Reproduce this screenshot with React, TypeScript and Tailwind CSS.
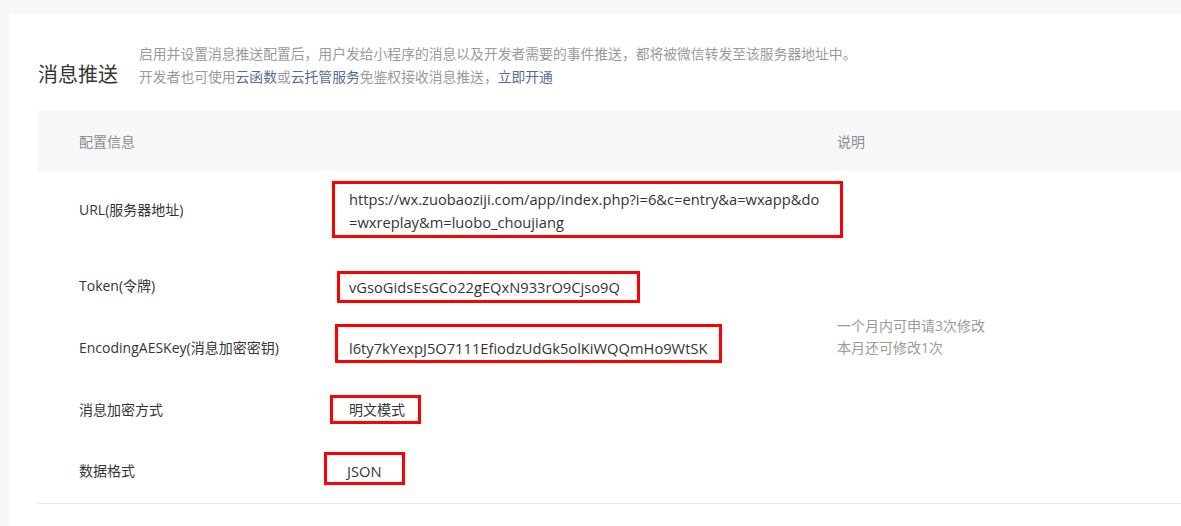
import React from 'react';

const font = "font-['Open_Sans','Noto_Sans_CJK_SC',sans-serif]";

const App: React.FC = () => {
  return (
    <div className={`min-h-[526px] bg-[#f6f7f9] pl-[9px] pt-[14px] ${font}`}>
      <div className="min-h-[512px] rounded-tl-[4px] bg-white pl-[29px]">
        {/* title + intro */}
        <div className="flex items-end pt-[28px]">
          <h2 className="-mb-[1px] w-[101px] text-[20px] leading-[28px] font-normal text-[#353535]">消息推送</h2>
          <div className="text-[13.8px] leading-[23px] text-[#9a9a9a]">
            <p>启用并设置消息推送配置后，用户发给小程序的消息以及开发者需要的事件推送，都将被微信转发至该服务器地址中。</p>
            <p>
              开发者也可使用<a className="text-[#576b95]">云函数</a>或<a className="text-[#576b95]">云托管服务</a>免鉴权接收消息推送，<a className="text-[#576b95]">立即开通</a>
            </p>
          </div>
        </div>

        {/* table */}
        <div className="mt-[23px] text-[14px] text-[#353535]">
          <div className="flex h-[60px] items-center bg-[#f6f7f9] text-[#8d8d8d]">
            <div className="w-[799px] pl-[41px]">配置信息</div>
            <div>说明</div>
          </div>

          {/* URL */}
          <div className="flex h-[78px] items-start">
            <div className="mt-[28px] w-[294px] pl-[41px] leading-[22px]">URL(服务器地址)</div>
            <div className="mt-[10px] w-[511px] border-[3px] border-[#ff0000] pt-[4px] pb-[1px] pl-[14px] text-[14.7px] leading-[23px]">
              https://wx.zuobaoziji.com/app/index.php?i=6&amp;c=entry&amp;a=wxapp&amp;do
              <br />
              =wxreplay&amp;m=luobo_choujiang
            </div>
          </div>

          {/* Token */}
          <div className="flex h-[64px] items-start">
            <div className="mt-[26px] w-[299px] pl-[41px] leading-[22px]">Token(令牌)</div>
            <div className="mt-[22px] w-[303px] border-[3px] border-[#ff0000] py-[2px] pl-[9px] text-[14.7px] leading-[22px]">
              vGsoGidsEsGCo22gEQxN933rO9Cjso9Q
            </div>
          </div>

          {/* EncodingAESKey */}
          <div className="flex h-[60px] items-start">
            <div className="mt-[24px] w-[297px] pl-[41px] leading-[22px]">EncodingAESKey(消息加密密钥)</div>
            <div className="mt-[11px] w-[387px] border-[3px] border-[#ff0000] pt-[10px] pb-[1px] pl-[11px] text-[14.7px] leading-[22px]">
              l6ty7kYexpJ5O7111EfiodzUdGk5olKiWQQmHo9WtSK
            </div>
            <div className="mt-[2px] ml-[115px] leading-[22px] text-[#9a9a9a]">
              <p>一个月内可申请3次修改</p>
              <p>本月还可修改1次</p>
            </div>
          </div>

          {/* 消息加密方式 */}
          <div className="flex h-[67px] items-start">
            <div className="mt-[26px] w-[292px] pl-[41px] leading-[22px]">消息加密方式</div>
            <div className="mt-[22px] w-[91px] border-[3px] border-[#ff0000] pt-[1px] pl-[16px] leading-[22px]">
              明文模式
            </div>
          </div>

          {/* 数据格式 */}
          <div className="flex h-[64px] items-start border-b border-[#e6e6e6]">
            <div className="mt-[20px] w-[286px] pl-[41px] leading-[22px]">数据格式</div>
            <div className="mt-[12px] w-[81px] border-[3px] border-[#ff0000] pt-[5px] pl-[20px] text-[14.7px] leading-[22px]">
              JSON
            </div>
          </div>
        </div>
      </div>
    </div>
  );
};

export default App;
